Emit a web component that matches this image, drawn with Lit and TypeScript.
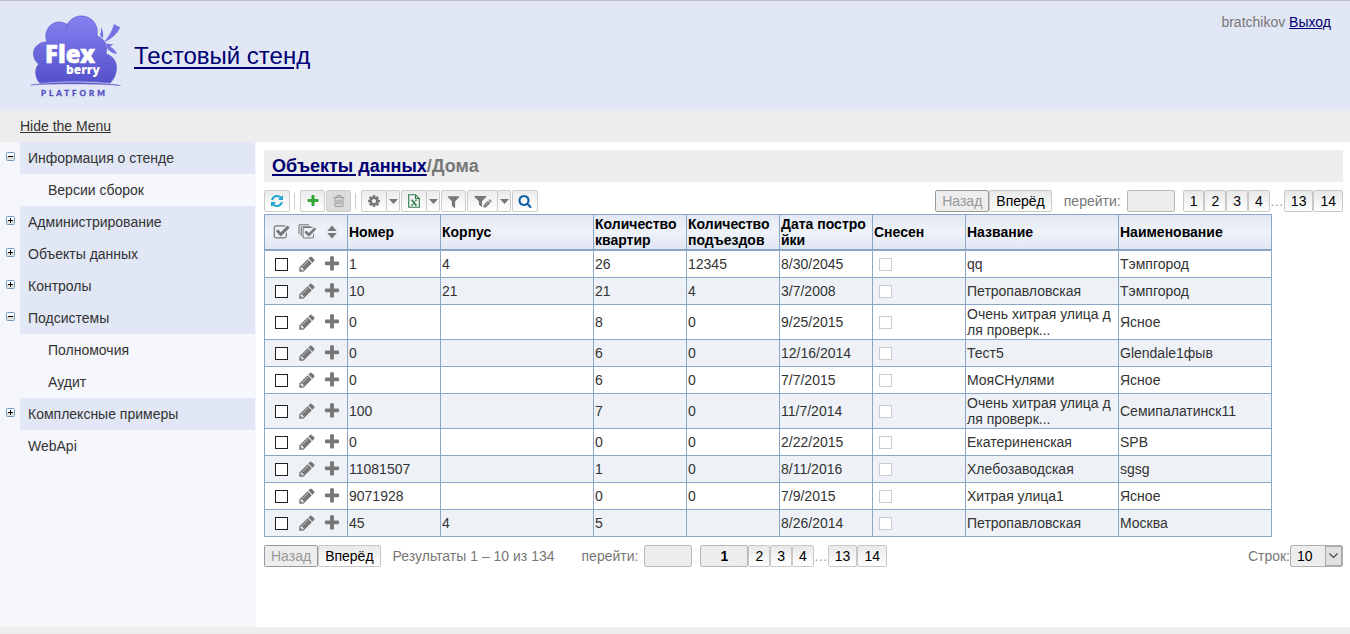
import { LitElement, html, css, svg, nothing, TemplateResult } from "lit";
import { customElement, property } from "lit/decorators.js";
import { classMap } from "lit/directives/class-map.js";

const GLYPHS: Record<string, string> = {
  refresh:
    "M1639 1056q0 5-1 7-64 268-268 434.5t-478 166.5q-146 0-282.5-55t-243.5-157l-129 129q-19 19-45 19t-45-19-19-45v-448q0-26 19-45t45-19h448q26 0 45 19t19 45-19 45l-137 137q71 66 161 102t187 36q134 0 250-65t186-179q11-17 53-117 8-23 30-23h192q13 0 22.5 9.5t9.5 22.5zm25-800v448q0 26-19 45t-45 19h-448q-26 0-45-19t-19-45 19-45l138-138q-148-137-349-137-134 0-250 65t-186 179q-11 17-53 117-8 23-30 23h-199q-13 0-22.5-9.5t-9.5-22.5v-7q65-268 270-434.5t480-166.5q146 0 284 55.5t245 156.5l130-129q19-19 45-19t45 19 19 45z",
  plus: "M1600 736v192q0 40-28 68t-68 28h-416v416q0 40-28 68t-68 28h-192q-40 0-68-28t-28-68v-416h-416q-40 0-68-28t-28-68v-192q0-40 28-68t68-28h416v-416q0-40 28-68t68-28h192q40 0 68 28t28 68v416h416q40 0 68 28t28 68z",
  pencil:
    "M491 1536l91-91-235-235-91 91v107h128v128h107zm523-928q0-22-22-22-10 0-17 7l-542 542q-7 7-7 17 0 22 22 22 10 0 17-7l542-542q7-7 7-17zm-54-192l416 416-832 832h-416v-416zm683 96q0 53-37 90l-166 166-416-416 166-165q36-38 90-38 53 0 91 38l235 234q37 39 37 91z",
  trash:
    "M704 736v576q0 14-9 23t-23 9h-64q-14 0-23-9t-9-23v-576q0-14 9-23t23-9h64q14 0 23 9t9 23zm256 0v576q0 14-9 23t-23 9h-64q-14 0-23-9t-9-23v-576q0-14 9-23t23-9h64q14 0 23 9t9 23zm256 0v576q0 14-9 23t-23 9h-64q-14 0-23-9t-9-23v-576q0-14 9-23t23-9h64q14 0 23 9t9 23zm128 724v-948h-896v948q0 22 7 40.5t14.5 27 10.5 8.5h832q3 0 10.5-8.5t14.5-27 7-40.5zm-672-1076h448l-48-117q-7-9-17-11h-317q-10 2-17 11zm928 32v64q0 14-9 23t-23 9h-96v948q0 83-47 143.5t-113 60.5h-832q-66 0-113-58.5t-47-141.5v-952h-96q-14 0-23-9t-9-23v-64q0-14 9-23t23-9h309l70-167q15-37 54-63t79-26h320q40 0 79 26t54 63l70 167h309q14 0 23 9t9 23z",
  filter:
    "M1595 295q17 41-14 70l-493 493v742q0 42-39 59-13 5-25 5-27 0-45-19l-256-256q-19-19-19-45v-486l-493-493q-31-29-14-70 17-39 59-39h1280q42 0 59 39z",
  search:
    "M1216 832q0-185-131.5-316.5t-316.5-131.5-316.5 131.5-131.5 316.5 131.5 316.5 316.5 131.5 316.5-131.5 131.5-316.5zm512 832q0 52-38 90t-90 38q-54 0-90-38l-343-342q-179 124-399 124-143 0-273.5-55.5t-225-150-150-225-55.5-273.5 55.5-273.5 150-225 225-150 273.5-55.5 273.5 55.5 225 150 150 225 55.5 273.5q0 220-124 399l343 343q37 37 37 90z",
  cog: "M1152 896q0-106-75-181t-181-75-181 75-75 181 75 181 181 75 181-75 75-181zm512-109v222q0 12-8 23t-20 13l-185 28q-19 54-39 91 35 50 107 138 10 12 10 25t-9 23q-27 37-99 108t-94 71q-12 0-26-9l-138-108q-44 23-91 38-16 136-29 186-7 28-36 28h-222q-14 0-24.5-8.5t-11.5-21.5l-28-184q-49-16-90-37l-141 107q-10 9-25 9-14 0-25-11-126-114-165-168-7-10-7-23 0-12 8-23 15-21 51-66.5t54-70.5q-27-50-41-99l-183-27q-13-2-21-12.5t-8-23.5v-222q0-12 8-23t19-13l186-28q14-46 39-92-40-57-107-138-10-12-10-24 0-10 9-23 26-36 98.5-107.5t94.5-71.5q13 0 26 10l138 107q44-23 91-38 16-136 29-186 7-28 36-28h222q14 0 24.5 8.5t11.5 21.5l28 184q49 16 90 37l142-107q9-9 24-9 13 0 25 10 129 119 165 170 7 8 7 22 0 12-8 23-15 21-51 66.5t-54 70.5q26 50 41 98l183 28q13 2 21 12.5t8 23.5z",
  check:
    "M1472 930v318q0 119-84.5 203.5t-203.500 84.500h-832q-119 0-203.500-84.500t-84.500-203.500v-832q0-119 84.500-203.500t203.500-84.500h832q63 0 117 25 15 7 18 23 3 17-9 29l-49 49q-10 10-23 10-3 0-9-2-23-6-45-6h-832q-66 0-113 47t-47 113v832q0 66 47 113t113 47h832q66 0 113-47t47-113v-254q0-13 9-22l64-64q10-10 23-10 6 0 12 3 20 8 20 29zm231-489l-814 814q-24 24-57 24t-57-24l-430-430q-24-24-24-57t24-57l110-110q24-24 57-24t57 24l263 263 647-647q24-24 57-24t57 24l110 110q24 24 24 57t-24 57z",
};

const glyph = (name: string, size = 14) => html`<svg
  width=${size} height=${size} viewBox="0 0 1792 1792" fill="currentColor" aria-hidden="true"
><path d=${GLYPHS[name]}></path></svg>`;

const drawing = (w: number, h: number, body: TemplateResult | unknown) => html`<svg
  width=${w} height=${h} viewBox="0 0 ${w} ${h}" fill="none" aria-hidden="true"
>${body}</svg>`;

const caret = drawing(9, 5, svg`<path d="M0 0H9L4.5 5Z" fill="currentColor"/>`);

const excel = drawing(12, 14, svg`
  <path d="M0.7 0.7H7.5L11.3 4.5V13.3H0.7Z M7.5 0.7V4.5H11.3" stroke="currentColor" stroke-width="1.1"/>
  <path d="M4 6.200L8 11.2" stroke="currentColor" stroke-width="1.5"/>
  <path d="M8 6.200L4 11.2M2.800 6.200H5.200M7 6.200H9.200M2.800 11.2H5.200M6.800 11.2H9.200" stroke="currentColor" stroke-width="0.900"/>`);

const filterEdit = drawing(18, 13, svg`
  <path d="M0.800 1H12Q12.800 1.300 12.200 2L8 6.200V12.200L4.900 9.500V6.200L0.600 2Q0.100 1.300 0.800 1Z" fill="currentColor"/>
  <path d="M9.500 12.600V10.200L14 5.700L16.400 8.100L11.900 12.600ZM14.600 5.100L15.300 4.400Q15.700 4.200 16.100 4.600L17.500 6Q17.800 6.400 17.500 6.800L16.900 7.500Z" fill="currentColor"/>
  <path d="M10.900 11.200L14.800 7.300" stroke="#ddd" stroke-width="0.600"/>`);

const checkPages = html`<svg width="18" height="16" viewBox="0 0 18 16" fill="none" aria-hidden="true">
  <path d="M1 10V1.600Q1 0.700 1.900 0.700H11M3.200 12V3.700Q3.200 2.800 4.100 2.800H13" stroke="currentColor" stroke-width="1.100"></path>
  <g transform="translate(4 2) scale(0.0082)"><path d=${GLYPHS.check} fill="currentColor"></path></g>
</svg>`;

const sortArrows = drawing(10, 14, svg`<path d="M5 0.6L9.8 6H0.2ZM5 13.4L9.8 8H0.2Z" fill="currentColor"/>`);

@customElement("brand-logo")
export class BrandLogo extends LitElement {
  static styles = css`
    :host { display: block; }
    svg { display: block; }
    .word { font-family: "Noto Sans", "Open Sans", sans-serif; font-weight: 900; fill: #fff; }
    .flex { font-size: 24px; stroke: #fff; stroke-width: 0.5px; }
    .berry { font-size: 12px; }
    .platform { font-family: Lato, sans-serif; font-size: 8px; font-weight: 900; letter-spacing: 3px; fill: #524fc4;
      stroke: #524fc4; stroke-width: 0.3px; }
  `;
  render() {
    return html`<svg width="92" height="84" viewBox="0 0 92 84" role="img" aria-label="Flexberry Platform">
      <defs>
        <linearGradient id="violet" x1="0" y1="0" x2="0" y2="1">
          <stop offset="0" stop-color="#8583f1"></stop>
          <stop offset="1" stop-color="#5350ca"></stop>
        </linearGradient>
      </defs>
      <path fill="url(#violet)" stroke="#6562cf" stroke-width="0.8"
        d="M10 68C5 64 4 53 9 49C3 46 1 34 8 30C11 27 14 27 17 27C13 17 20 7 29 7C32 7 35 8 37 9.500C41 3 47 1 51 1C62 1 69 10 67 21C74 23 78 30 76 39C84 41 88 49 86 57C85 62 83 65 80 68C58 65.500 32 65.500 10 68Z"></path>
      <path d="M38 9Q36 12 35.500 15" stroke="#6865d6" fill="none"></path>
      <path d="M0.500 70C20 66.500 70 66.500 90.500 70.500C68 68.500 20 68.500 0.500 70Z" fill="#5f5ccd" stroke="#5f5ccd" stroke-width="0.4"></path>
      <path d="M84 9C87 11 89 12 90.500 12C87 19 82 24 74 27C79 21 82 16 84 9Z" fill="#7573e4"></path>
      <path d="M71 12Q74 18 73 23L70 20.500Q71.500 16 71 12Z" fill="#7573e4"></path>
      <path d="M76 28Q80 30 84 29L80 31.500Q85 34 87 39Q80 38 77 33Z" fill="#7573e4"></path>
      <text class="word flex" x="15" y="48">Flex</text>
      <text class="word berry" x="36" y="59">berry</text>
      <text class="platform" x="11" y="81">PLATFORM</text>
    </svg>`;
  }
}

interface MenuEntry { text: string; level: 1 | 2; state?: "open" | "closed"; }

const MENU: MenuEntry[] = [
  { text: "Информация о стенде", level: 1, state: "open" },
  { text: "Версии сборок", level: 2 },
  { text: "Администрирование", level: 1, state: "closed" },
  { text: "Объекты данных", level: 1, state: "closed" },
  { text: "Контролы", level: 1, state: "closed" },
  { text: "Подсистемы", level: 1, state: "open" },
  { text: "Полномочия", level: 2 },
  { text: "Аудит", level: 2 },
  { text: "Комплексные примеры", level: 1, state: "closed" },
  { text: "WebApi", level: 1 },
];

@customElement("side-menu")
export class SideMenu extends LitElement {
  static styles = css`
    :host { display: block; flex: none; width: 256px; background: #f5f7fd; }
    .list { list-style: none; margin: 0; padding: 0 1px 0 0; }
    .entry { display: grid; grid-template-columns: 20px 1fr; }
    .link { grid-column: 2; padding: 0 8px; line-height: 32px; color: #333; text-decoration: none; }
    .group .link { background: #e1e7f5; }
    .nested .link { padding-left: 28px; }
    .toggle { width: 9px; height: 9px; margin: 10px 0 0 6px; padding: 0; border: 0; background: none; display: block; }
    .toggle svg { display: block; }
  `;
  render() {
    return html`<nav><ul class="list">${MENU.map((m) => html`
      <li class=${classMap({ entry: true, group: !!m.state, nested: m.level === 2 })}>
        ${m.state ? html`<button class="toggle" aria-label=${m.text} aria-expanded=${m.state === "open"}>
          ${drawing(9, 9, svg`
            <rect x="0.5" y="0.5" width="8" height="8" rx="1" fill="#e4e3dd" stroke="#6f9cc8"/>
            <path d="M1 1H8V4H1Z" fill="#fff"/>
            <path d=${m.state === "open" ? "M2 4.5H7" : "M2 4.5H7M4.5 2V7"} stroke="#000"/>`)}
        </button>` : nothing}
        <a class="link" href="#">${m.text}</a>
      </li>`)}</ul></nav>`;
  }
}

const controls = css`
  button, input, select { font: inherit; margin: 0; box-sizing: border-box; }
  svg { display: block; }
`;

@customElement("grid-pager")
export class GridPager extends LitElement {
  @property({ type: Boolean, reflect: true }) summary = false;

  static styles = [controls, css`
    :host { display: flex; align-items: center; height: 22px; line-height: 20px; color: #777; white-space: nowrap; }
    .btn { height: 22px; padding: 0 6px; border: 1px solid #c8c8c8; border-radius: 2px; color: #000;
      background: linear-gradient(#e8e8e8, #fff); line-height: 20px; }
    .btn:disabled { color: #999; background: #ededed; border-color: #999; }
    .current { min-width: 48px; font-weight: bold; background: #ededed; border-color: #b5b5b5; }
    .jump { display: flex; align-items: center; gap: 6px; margin: 0 8px 0 12px; }
    .box { width: 48px; height: 22px; padding: 0 6px; border: 1px solid #b8b8b8; border-radius: 2px; background: #ededed; }
    .results { margin: 0 15px 0 12px; }
    .dots { width: 14px; text-align: center; color: #999; }
  `];
  render() {
    return html`
      <button class="btn" disabled>Назад</button><button class="btn">Вперёд</button>
      ${this.summary ? html`<span class="results">Результаты 1 – 10 из 134</span>` : nothing}
      <label class="jump">перейти: <input class="box" type="text"></label>
      <button class=${classMap({ btn: true, current: this.summary })}>1</button>
      ${["2", "3", "4"].map((n) => html`<button class="btn">${n}</button>`)}
      <span class="dots">…</span>
      ${["13", "14"].map((n) => html`<button class="btn">${n}</button>`)}`;
  }
}

@customElement("grid-toolbar")
export class GridToolbar extends LitElement {
  static styles = [controls, css`
    :host { display: flex; align-items: center; gap: 1px; }
    .tool { display: flex; align-items: center; justify-content: center; width: 26px; height: 22px; padding: 0;
      border: 1px solid #ccc; border-radius: 2px; background: linear-gradient(#ebebeb, #fff); color: #777; }
    .split { display: flex; }
    .slim { width: 25px; }
    .arrow { width: 14px; margin-left: -1px; }
    .wide { width: 31px; }
    .off { background: #ddd; color: #999; }
    .line { width: 1px; height: 16px; margin: 0 4px 0 3px; background: #ccc; }
    .cyan { color: #1fa5cf; }
    .green { color: #2fa836; }
    .dark { color: #2a7a48; }
    .blue { color: #0a5ca8; }
  `];
  render() {
    return html`
      <button class="tool cyan" aria-label="Обновить">${glyph("refresh")}</button>
      <span class="line"></span>
      <button class="tool slim green" aria-label="Добавить">${glyph("plus")}</button>
      <button class="tool slim off" aria-label="Удалить" disabled>${glyph("trash")}</button>
      <span class="line"></span>
      <span class="split">
        <button class="tool" aria-label="Настройки">${glyph("cog")}</button>
        <button class="tool arrow" aria-label="Выбор настройки">${caret}</button>
      </span>
      <span class="split">
        <button class="tool dark" aria-label="Экспорт в Excel">${excel}</button>
        <button class="tool arrow" aria-label="Параметры экспорта">${caret}</button>
      </span>
      <button class="tool slim" aria-label="Фильтр">${glyph("filter", 15)}</button>
      <span class="split">
        <button class="tool wide" aria-label="Изменить фильтр">${filterEdit}</button>
        <button class="tool arrow" aria-label="Выбор фильтра">${caret}</button>
      </span>
      <button class="tool blue" aria-label="Поиск">${glyph("search")}</button>`;
  }
}

const COLUMNS = ["Номер", "Корпус", "Количество квартир", "Количество подъездов", "Дата постройки", "Снесен", "Название", "Наименование"];
const WIDTHS = ["tools", "narrow", "wide", "narrow", "narrow", "narrow", "narrow", "wide", "wide"];
const LONG_STREET = "Очень хитрая улица для проверк...";

const ROWS: string[][] = [
  ["1", "4", "26", "12345", "8/30/2045", "qq", "Тэмпгород"],
  ["10", "21", "21", "4", "3/7/2008", "Петропавловская", "Тэмпгород"],
  ["0", "", "8", "0", "9/25/2015", LONG_STREET, "Ясное"],
  ["0", "", "6", "0", "12/16/2014", "Тест5", "Glendale1фыв"],
  ["0", "", "6", "0", "7/7/2015", "МояСНулями", "Ясное"],
  ["100", "", "7", "0", "11/7/2014", LONG_STREET, "Семипалатинск11"],
  ["0", "", "0", "0", "2/22/2015", "Екатериненская", "SPB"],
  ["11081507", "", "1", "0", "8/11/2016", "Хлебозаводская", "sgsg"],
  ["9071928", "", "0", "0", "7/9/2015", "Хитрая улица1", "Ясное"],
  ["45", "4", "5", "", "8/26/2014", "Петропавловская", "Москва"],
];

@customElement("house-grid")
export class HouseGrid extends LitElement {
  static styles = [controls, css`
    :host { display: block; }
    .grid { width: 1008px; border-collapse: separate; border-spacing: 0; table-layout: fixed; line-height: 16px;
      border-top: 1px solid #8ba6c9; border-left: 1px solid #8ba6c9; box-sizing: border-box; }
    .col-tools { width: 83px; }
    .col-narrow { width: 93px; }
    .col-wide { width: 153px; }
    .head, .cell { padding: 1px; text-align: left; vertical-align: middle; word-break: break-all;
      border-right: 1px solid #8ba6c9; border-bottom: 1px solid #8ba6c9; }
    .head { border-bottom-width: 2px; color: #000; font-weight: bold; background: linear-gradient(#e3e9f5, #eff2f8 50%, #e0e6f4); }
    .cell { height: 24px; }
    .row:nth-child(even) .cell { background: #eef2f7; }
    .actions { display: grid; grid-template-columns: repeat(3, 25px); padding: 0 3px; place-items: center; color: #777; }
    .act { padding: 0; border: 0; background: none; color: inherit; }
    .tick { appearance: none; display: block; width: 13px; height: 13px; border: 1px solid #222; background: #fff; }
    .tick:disabled { border-color: #ccc; margin-left: 5px; }
  `];
  render() {
    return html`<table class="grid">
      <colgroup>${WIDTHS.map((w) => html`<col class="col-${w}">`)}</colgroup>
      <thead><tr>
        <th class="head"><div class="actions">
          <button class="act" aria-label="Выбрать все">${glyph("check", 17)}</button>
          <button class="act" aria-label="Выбрать на всех страницах">${checkPages}</button>
          <button class="act" aria-label="Сортировка">${sortArrows}</button>
        </div></th>
        ${COLUMNS.map((c) => html`<th class="head" scope="col">${c}</th>`)}
      </tr></thead>
      <tbody>${ROWS.map((r, i) => html`<tr class="row">
        <td class="cell"><div class="actions">
          <input class="tick" type="checkbox" aria-label="Выбрать строку ${i + 1}">
          <button class="act" aria-label="Изменить">${glyph("pencil", 18)}</button>
          <button class="act" aria-label="Добавить">${glyph("plus", 18)}</button>
        </div></td>
        ${r.slice(0, 5).map((v) => html`<td class="cell">${v}</td>`)}
        <td class="cell"><input class="tick" type="checkbox" disabled aria-label="Снесен"></td>
        ${r.slice(5).map((v) => html`<td class="cell">${v}</td>`)}
      </tr>`)}</tbody>
    </table>`;
  }
}

@customElement("app-root")
export class AppRoot extends LitElement {
  static styles = [controls, css`
    :host { display: flex; flex-direction: column; min-height: 100vh; box-sizing: border-box; background: #fff; color: #333;
      font: 14px/16px "Liberation Sans", Arial, sans-serif; border-top: 1px solid #c0c0c8; }
    .top { display: flex; align-items: flex-start; height: 110px; padding: 0 19px 0 30px; background: #e1e7f5; }
    .logo { margin: 14px 12px 0 0; }
    .site { margin-top: 40px; font-size: 24px; line-height: 30px; color: #000073; text-decoration-thickness: 2px; text-underline-offset: 3px; }
    .user { margin: 13px 0 0 auto; color: #777; }
    .exit { color: #000073; }
    .bar { padding: 0 20px; line-height: 31px; background: #ededed; }
    .hide { color: #333; }
    .body { display: flex; flex: 1; }
    .main { flex: 1; min-width: 0; padding: 8px 7px 16px 8px; }
    .crumbs { margin: 0 0 8px; padding: 0 8px; font-size: 18px; line-height: 32px; font-weight: bold; color: #777; background: #ededed; }
    .up { color: #000073; text-decoration-thickness: 2px; text-underline-offset: 2px; }
    .strip { display: flex; align-items: center; justify-content: space-between; }
    .strip-top { margin-bottom: 2px; }
    .strip-bottom { margin-top: 8px; }
    .rows { display: flex; align-items: center; color: #777; }
    .picker { position: relative; display: flex; }
    .select { appearance: none; width: 53px; height: 22px; padding: 0 6px; border: 1px solid #b0b0b0; border-radius: 2px;
      background: #ededed; color: #000; }
    .chevron { position: absolute; top: 1px; right: 1px; bottom: 1px; width: 17px; box-sizing: border-box; display: grid;
      place-items: center; border: 1px solid #a8a8a8; background: #e1e1e1; color: #444; pointer-events: none; }
    .foot { height: 7px; background: #ededed; }
  `];
  render() {
    return html`
      <header class="top">
        <brand-logo class="logo"></brand-logo>
        <a class="site" href="#">Тестовый стенд</a>
        <div class="user">bratchikov <a class="exit" href="#">Выход</a></div>
      </header>
      <div class="bar"><a class="hide" href="#">Hide the Menu</a></div>
      <div class="body">
        <side-menu></side-menu>
        <main class="main">
          <h1 class="crumbs"><a class="up" href="#">Объекты данных</a>/Дома</h1>
          <div class="strip strip-top"><grid-toolbar></grid-toolbar><grid-pager></grid-pager></div>
          <house-grid></house-grid>
          <div class="strip strip-bottom">
            <grid-pager summary></grid-pager>
            <div class="rows">
              <label for="rows">Строк:</label>
              <span class="picker">
                <select id="rows" class="select"><option>10</option><option>20</option><option>50</option></select>
                <span class="chevron">${drawing(9, 6, svg`<path d="M0.500 0.500L4.500 4.500L8.500 0.500" stroke="currentColor" stroke-width="1.2"/>`)}</span>
              </span>
            </div>
          </div>
        </main>
      </div>
      <footer class="foot"></footer>`;
  }
}
